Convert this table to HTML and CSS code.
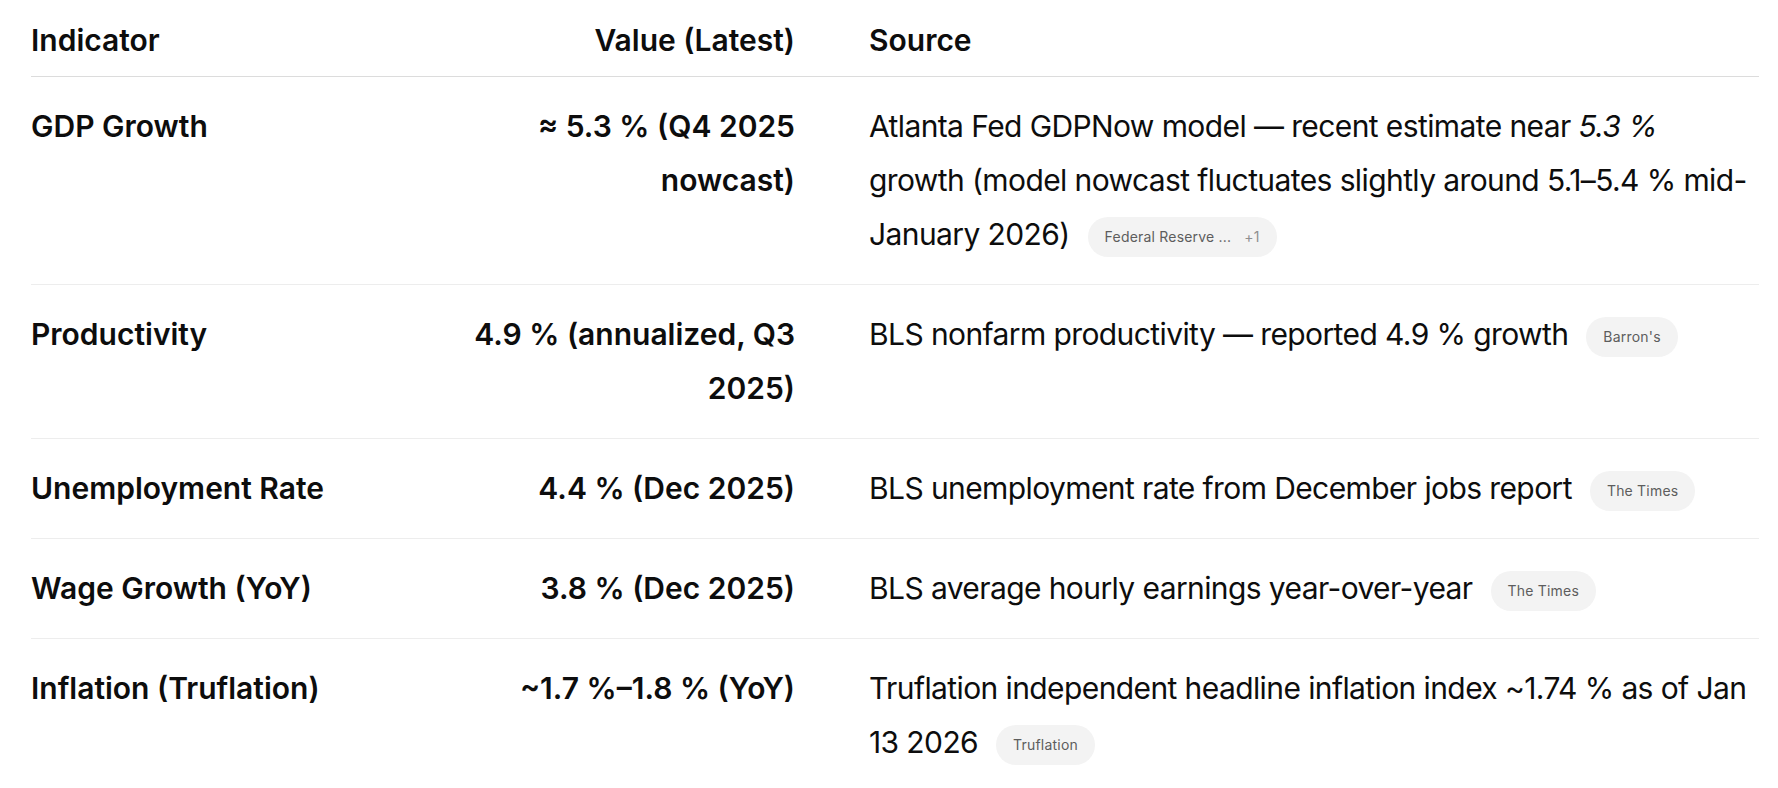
FILE: index.html
```html
<!DOCTYPE html>
<html lang="en">
<head>
<meta charset="utf-8">
<title>Indicators</title>
<link rel="stylesheet" href="styles.css">
</head>
<body>
<div class="wrap">
  <table class="data">
    <colgroup>
      <col class="c-ind">
      <col class="c-val">
      <col class="c-src">
    </colgroup>
    <thead>
      <tr>
        <th class="ind">Indicator</th>
        <th class="val">Value (Latest)</th>
        <th class="src">Source</th>
      </tr>
    </thead>
    <tbody>
      <tr>
        <td class="ind">GDP Growth</td>
        <td class="val">≈ 5.3 % (Q4 2025 nowcast)</td>
        <td class="src">Atlanta Fed GDPNow model — recent estimate near <em>5.3 %</em> growth (model nowcast fluctuates slightly around 5.1–5.4 % mid-January 2026)<span class="chip"><span class="chip-name">Federal Reserve ...</span><span class="chip-more">+1</span></span></td>
      </tr>
      <tr>
        <td class="ind">Productivity</td>
        <td class="val">4.9 % (annualized, Q3 2025)</td>
        <td class="src">BLS nonfarm productivity — reported 4.9 % growth<span class="chip"><span class="chip-name">Barron's</span></span></td>
      </tr>
      <tr>
        <td class="ind">Unemployment Rate</td>
        <td class="val">4.4 % (Dec 2025)</td>
        <td class="src">BLS unemployment rate from December jobs report<span class="chip"><span class="chip-name">The Times</span></span></td>
      </tr>
      <tr>
        <td class="ind">Wage Growth (YoY)</td>
        <td class="val">3.8 % (Dec 2025)</td>
        <td class="src">BLS average hourly earnings year-over-year<span class="chip"><span class="chip-name">The Times</span></span></td>
      </tr>
      <tr>
        <td class="ind">Inflation (Truflation)</td>
        <td class="val">~1.7 %–1.8 % (YoY)</td>
        <td class="src">Truflation independent headline inflation index ~1.74 % as of Jan 13 2026<span class="chip"><span class="chip-name">Truflation</span></span></td>
      </tr>
    </tbody>
  </table>
</div>
</body>
</html>
```

FILE: styles.css
```css
html, body {
  margin: 0;
  padding: 0;
  background: #ffffff;
}

body {
  font-family: Inter, "Noto Sans", "Liberation Sans", sans-serif;
  color: #0d0d0d;
}

.wrap {
  padding: 0 19px 0 31px;
}

.data {
  width: 1728px;
  border-collapse: collapse;
  table-layout: fixed;
  font-size: 30px;
  line-height: 54px;
}

.c-ind { width: 400px; }
.c-val { width: 364px; }
.c-src { width: 964px; }

.data th,
.data td {
  padding: 0;
  vertical-align: top;
}

.data th {
  font-weight: 600;
  text-align: left;
  padding-top: 13px;
  padding-bottom: 9px;
  border-bottom: 1px solid #dcdcdc;
}

.data td {
  padding-top: 22px;
  padding-bottom: 23px;
  border-bottom: 1px solid #ededed;
}

.data tbody tr:last-child td {
  border-bottom: none;
}

.data .ind {
  font-weight: 600;
}

.data .val {
  font-weight: 600;
  text-align: right;
}

.data .src {
  padding-left: 74px;
  font-weight: 400;
}

.data td.src {
  letter-spacing: -0.6px;
}

.data th.src {
  font-weight: 600;
}

.data em {
  font-style: italic;
}

.chip {
  display: inline-flex;
  align-items: center;
  gap: 13px;
  height: 40px;
  padding: 0 17px;
  margin-left: 18px;
  border-radius: 20px;
  background: #f3f3f3;
  font-size: 14px;
  line-height: 18px;
  font-weight: 400;
  letter-spacing: 0.2px;
  color: #5d5d5d;
  vertical-align: middle;
  white-space: nowrap;
}

.chip-more {
  color: #8f8f8f;
}
```
